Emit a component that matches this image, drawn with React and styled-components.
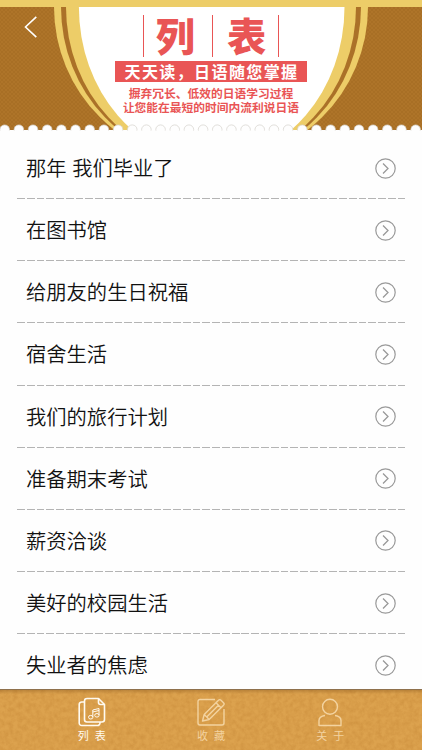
import React from 'react'
import styled, { createGlobalStyle } from 'styled-components'

const GlobalStyle = createGlobalStyle`
    * {
        box-sizing: border-box;
    }
    body {
        margin: 0;
        background: #fefefe;
        font-family: "Liberation Sans", "Noto Sans CJK SC", sans-serif;
    }
`

const PageStyled = styled.div`
    display: flex;
    flex-direction: column;
    width: 422px;
    height: 750px;
    overflow: hidden;
    background: #fefefe;
`

const HeaderStyled = styled.header`
    position: relative;
    flex: none;
    height: 137px;
    font-family: "Noto Sans CJK SC", sans-serif;
    color: #e95555;
    .art {
        position: absolute;
        inset: 0;
    }
`

const BackButton = styled.button`
    position: absolute;
    left: 20px;
    top: 12px;
    width: 22px;
    height: 30px;
    padding: 0;
    border: 0;
    background: none;
    svg {
        display: block;
    }
`

const HeaderContent = styled.div`
    position: relative;
    display: flex;
    flex-direction: column;
    align-items: center;
    padding-top: 15px;
`

const Title = styled.h1`
    display: flex;
    width: 136px;
    height: 42px;
    margin: 0;
    border-left: 1px solid #e95555;
    font-size: 39px;
    font-weight: 900;
    line-height: 38px;
    span {
        flex: 1;
        text-align: center;
        border-right: 1px solid #e95555;
    }
    span:first-child {
        padding-right: 5px;
    }
    span:last-child {
        padding-left: 3px;
    }
`

const Banner = styled.p`
    width: 192px;
    height: 21px;
    margin: 4px 0 5px;
    background: #e95555;
    color: #fff;
    font-size: 16px;
    font-weight: 700;
    line-height: 20px;
    letter-spacing: 1.4px;
    text-indent: 1px;
    text-align: center;
    white-space: nowrap;
`

const Slogan = styled.p`
    margin: 0;
    font-family: "Liberation Sans", "Noto Sans CJK SC", sans-serif;
    font-size: 11.75px;
    font-weight: 700;
    line-height: 13.6px;
    text-align: center;
    white-space: nowrap;
`

const List = styled.ul`
    flex: none;
    height: 552px;
    margin: 0;
    padding: 0 16.5px;
    list-style: none;
    overflow: hidden;
`

const Row = styled.li`
    display: flex;
    align-items: center;
    justify-content: space-between;
    height: 62.15px;
    padding: 0 10px 0 9.5px;
    background: repeating-linear-gradient(90deg, #b4b4b4 0 7.8px, transparent 7.8px 9.76px) left bottom / 100% 1px no-repeat;
    font-size: 20.3px;
    font-weight: 350;
    color: #111;
    span {
        padding-top: 2px;
        line-height: 30px;
    }
`

const TabBar = styled.nav`
    position: relative;
    flex: none;
    display: grid;
    grid-template-columns: repeat(3, 119.2px);
    justify-content: center;
    height: 61px;
    border-top: 1px solid #8f714c;
    background: #dca24e;
    .paper {
        position: absolute;
        inset: 0;
    }
`

const Tab = styled.a`
    position: relative;
    display: flex;
    flex-direction: column;
    align-items: center;
    padding-top: 7px;
    color: ${(props) => (props.$active ? '#fffaf0' : '#f3d3a0')};
    font-size: 11px;
    line-height: 14px;
    svg {
        display: block;
        margin-bottom: 2px;
    }
    span {
        letter-spacing: 6px;
        margin-right: -6px;
    }
`

const lessons = [
    '那年 我们毕业了',
    '在图书馆',
    '给朋友的生日祝福',
    '宿舍生活',
    '我们的旅行计划',
    '准备期末考试',
    '薪资洽谈',
    '美好的校园生活',
    '失业者的焦虑',
]

const scallops = Array.from({ length: 31 }, (_, i) => 4.7 + i * 14.17)

function HeaderArt() {
    return (
        <svg className="art" width="422" height="137" viewBox="0 0 422 137">
            <defs>
                <pattern id="weave" width="4" height="4" patternUnits="userSpaceOnUse">
                    <rect width="4" height="4" fill="#a86f25" />
                    <path d="M0 0l4 4M4 0L0 4" stroke="#b0752b" strokeWidth="0.7" />
                </pattern>
                <clipPath id="panel">
                    <rect y="7" width="422" height="123" />
                </clipPath>
            </defs>
            <rect width="422" height="7" fill="#edcd68" />
            <g clipPath="url(#panel)">
                <rect y="7" width="422" height="123" fill="url(#weave)" />
                <ellipse cx="211" cy="7" rx="157" ry="156" fill="#edcd68" />
                <ellipse cx="211" cy="7" rx="150" ry="156" fill="#ab7128" />
                <ellipse cx="211" cy="7" rx="145" ry="156" fill="#edcd68" />
                <ellipse cx="211.7" cy="7" rx="132.8" ry="153.5" fill="#fff" />
            </g>
            {scallops.map((x) => (
                <circle key={x} cx={x} cy="129.7" r="4.8" fill="#fefefe" stroke="#d4d1cc" strokeWidth="0.7" />
            ))}
            <rect y="130.6" width="422" height="7" fill="#fefefe" />
        </svg>
    )
}

function ArrowIcon() {
    return (
        <svg width="21" height="21" viewBox="0 0 21 21" fill="none" stroke="#999">
            <circle cx="10.5" cy="10.5" r="9.7" strokeWidth="1.2" />
            <path d="M8 5.5l5 5-5 5" strokeWidth="1.3" />
        </svg>
    )
}

function MusicIcon() {
    return (
        <svg width="28" height="30" viewBox="0 0 28 30" fill="none" stroke="currentColor" strokeWidth="1.6" strokeLinejoin="round">
            <path d="M9 1.500h11.500L26.500 7.500V22.500a2.500 2.500 0 0 1-2.500 2.500H9A2.500 2.500 0 0 1 6.500 22.500V4A2.500 2.500 0 0 1 9 1.500z" />
            <path d="M20.500 1.500v4a2 2 0 0 0 2 2h4" />
            <path d="M6.500 5H4A2.500 2.500 0 0 0 1.200 7.500v18.500a2.500 2.500 0 0 0 2.500 2.500h15.500A2.500 2.500 0 0 0 22 26v-1" />
            <g strokeWidth="1">
                <path d="M14.800 20v-7l6.200-1.500V18M14.800 15l6.200-1.500" />
                <ellipse cx="12.700" cy="20.200" rx="2.200" ry="1.800" />
                <ellipse cx="18.900" cy="18.300" rx="2.200" ry="1.800" />
            </g>
        </svg>
    )
}

function EditIcon() {
    return (
        <svg width="28" height="30" viewBox="0 0 28 30" fill="none" stroke="currentColor" strokeWidth="1.4" strokeLinejoin="round">
            <path d="M18 2.500H3a2 2 0 0 0-2 2v21.500a2 2 0 0 0 2 2h22a2 2 0 0 0 2-2V12" />
            <path d="M5.500 24l1.700-6.500L21.500 3.200c.8-.8 1.700-.8 2.500 0l2.500 2.500c.8.8.8 1.700 0 2.500L12.200 22.500 5.500 24zM7.200 17.500l5 5M19 5.700l5 5M9.700 20L21.500 8.200" />
        </svg>
    )
}

function UserIcon() {
    return (
        <svg width="28" height="30" viewBox="0 0 28 30" fill="none" stroke="currentColor" strokeWidth="1.4" strokeLinejoin="round">
            <circle cx="14" cy="9.700" r="7.500" />
            <path d="M9 18.500c-3.500.5-6 2.500-6 5V28.500h22V23.500c0-2.500-2.500-4.500-6-5" />
        </svg>
    )
}

export default function App() {
    return (
        <PageStyled>
            <GlobalStyle />
            <HeaderStyled>
                <HeaderArt />
                <HeaderContent>
                    <Title>
                        <span>列</span>
                        <span>表</span>
                    </Title>
                    <Banner>天天读，日语随您掌握</Banner>
                    <Slogan>
                        摒弃冗长、低效的日语学习过程
                        <br />
                        让您能在最短的时间内流利说日语
                    </Slogan>
                </HeaderContent>
                <BackButton aria-label="返回">
                    <svg width="22" height="30" viewBox="0 0 22 30" fill="none" stroke="#fff" strokeWidth="1.6">
                        <path d="M16.300 4.800L5.500 15l10.800 10.200" />
                    </svg>
                </BackButton>
            </HeaderStyled>
            <List>
                {lessons.map((lesson) => (
                    <Row key={lesson}>
                        <span>{lesson}</span>
                        <ArrowIcon />
                    </Row>
                ))}
            </List>
            <TabBar>
                <svg className="paper" width="422" height="60">
                    <defs>
                        <filter id="grain" x="0" y="0" width="100%" height="100%" colorInterpolationFilters="sRGB">
                            <feTurbulence type="fractalNoise" baseFrequency="0.22" numOctaves="3" seed="4" />
                            <feColorMatrix values="0 0 0 0 0.74  0 0 0 0 0.49  0 0 0 0 0.18  1.6 0 0 0 -0.5" />
                        </filter>
                        <linearGradient id="shade" x2="0" y2="1">
                            <stop offset="0" stopColor="#8a5a20" stopOpacity="0.4" />
                            <stop offset="1" stopColor="#8a5a20" stopOpacity="0" />
                        </linearGradient>
                    </defs>
                    <rect width="422" height="60" filter="url(#grain)" opacity="0.4" />
                    <rect width="422" height="4" fill="url(#shade)" />
                </svg>
                <Tab $active>
                    <MusicIcon />
                    <span>列表</span>
                </Tab>
                <Tab>
                    <EditIcon />
                    <span>收藏</span>
                </Tab>
                <Tab>
                    <UserIcon />
                    <span>关于</span>
                </Tab>
            </TabBar>
        </PageStyled>
    )
}
